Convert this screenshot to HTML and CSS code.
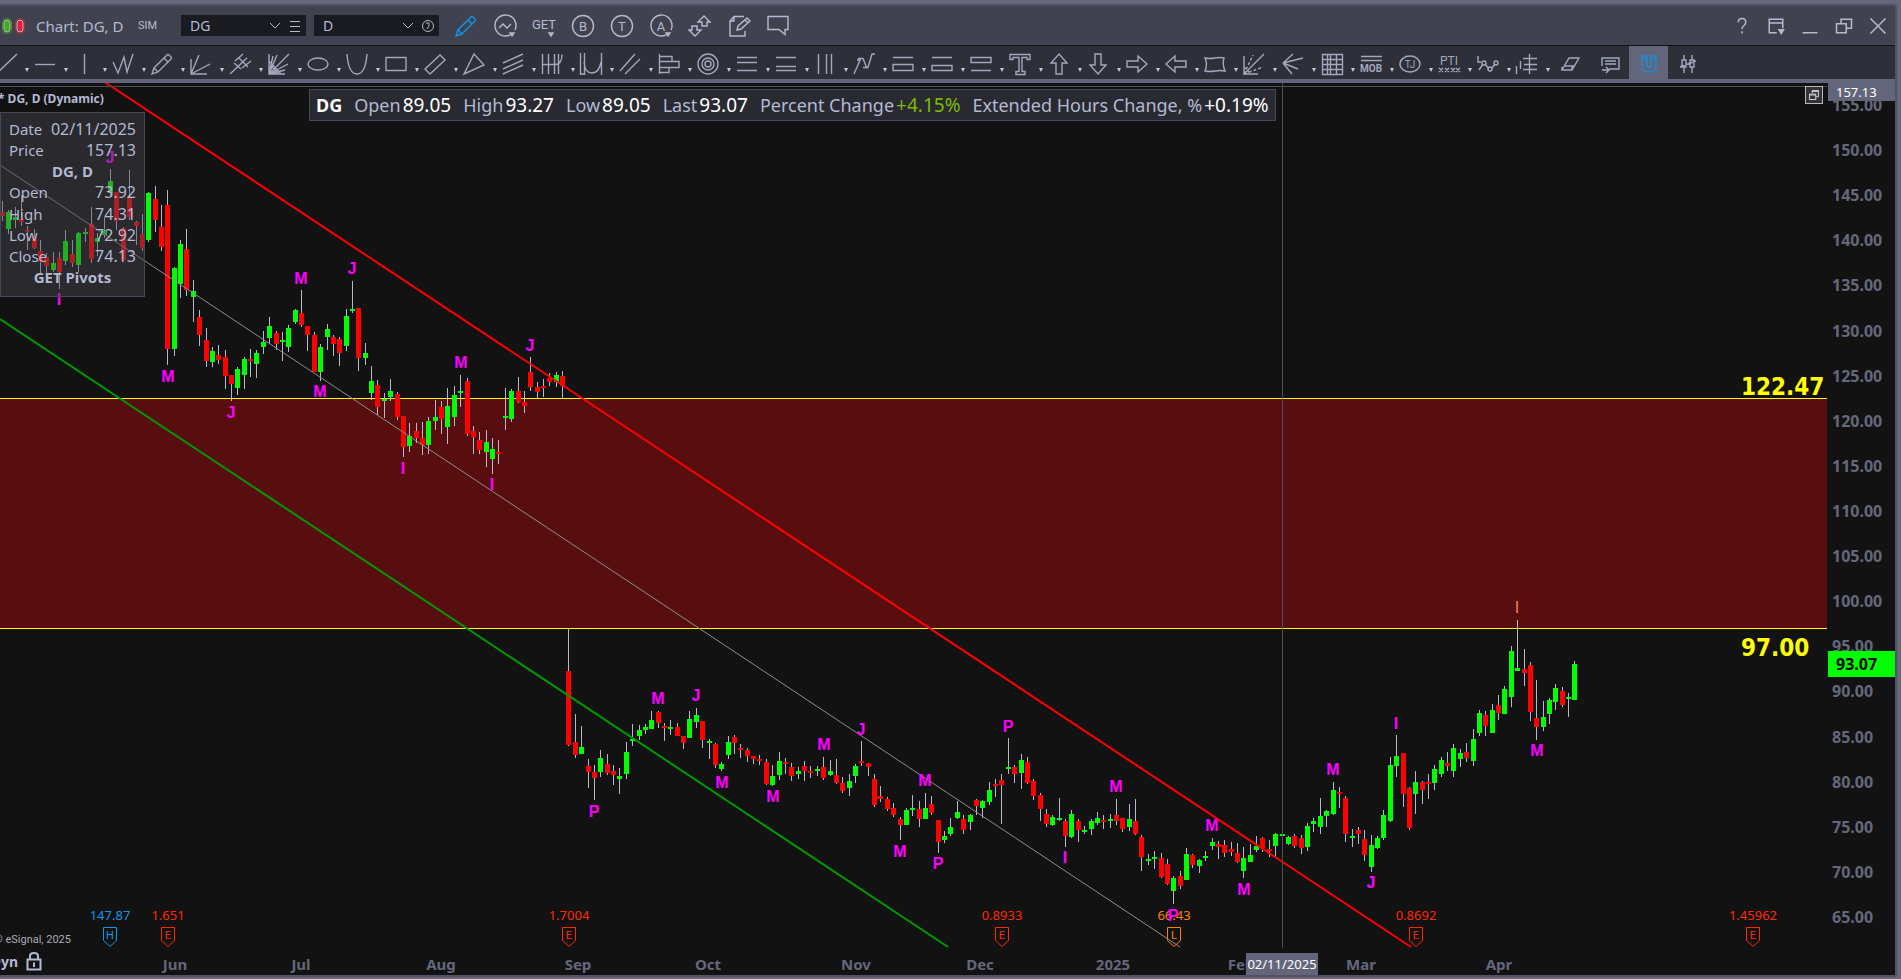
FILE: index.html
```html
<!DOCTYPE html>
<html lang="en">
    <head>
        <meta charset="utf-8">
        <title>Chart: DG, D</title>
        <link rel="stylesheet" href="styles.css">
    </head>
    <body>
        <div class="window">
            <header class="titlebar">
                <svg class="lights" viewBox="0 0 28 18">
                    <rect x="2.500" y="1.500" width="9" height="15" rx="4" fill="none" stroke="#3c9a1c"/>
                    <rect x="4" y="3" width="6" height="12" rx="3" fill="#3fae0e"/>
                    <rect x="15.500" y="1.500" width="9" height="15" rx="4" fill="none" stroke="#c0253a"/>
                    <rect x="17" y="3" width="6" height="12" rx="3" fill="#ee1c2e"/>
                </svg>
                <h1>Chart: DG, D</h1>
                <span class="sim">SIM</span>
                <div class="picker">
                    <select aria-label="Symbol"><option>DG</option></select>
                    <svg class="chevron" viewBox="0 0 12 8"><path d="M1 1l5 5 5-5"/></svg>
                    <button type="button" aria-label="Symbol list"><svg viewBox="0 0 14 14"><path d="M2 2.500h10M2 7.500h10M2 12.500h10"/></svg></button>
                </div>
                <div class="picker">
                    <select aria-label="Interval"><option>D</option></select>
                    <svg class="chevron" viewBox="0 0 12 8"><path d="M1 1l5 5 5-5"/></svg>
                    <button type="button" aria-label="Time template"><svg viewBox="0 0 14 14"><circle cx="7" cy="7" r="5.500"/><path d="M5 4h3v3l-2 3"/></svg></button>
                </div>
                <nav class="actions" id="actions"></nav>
                <nav class="controls" id="controls"></nav>
            </header>

            <nav class="toolbar" id="toolbar"></nav>

            <main class="chart">
                <div class="plot">
                    <svg id="plot" viewBox="0 83 1828 892" preserveAspectRatio="xMinYMin meet"></svg>
                    <p class="chart-name">* DG, D (Dynamic)</p>
                    <dl class="quote">
                        <div><dt class="symbol">DG</dt></div>
                        <div><dt>Open</dt><dd>89.05</dd></div>
                        <div><dt>High</dt><dd>93.27</dd></div>
                        <div><dt>Low</dt><dd>89.05</dd></div>
                        <div><dt>Last</dt><dd>93.07</dd></div>
                        <div><dt>Percent Change</dt><dd class="up">+4.15%</dd></div>
                        <div><dt>Extended Hours Change, %</dt><dd>+0.19%</dd></div>
                    </dl>
                    <table class="cursor">
                        <tr><th>Date</th><td>02/11/2025</td></tr>
                        <tr><th>Price</th><td>157.13</td></tr>
                        <tr><th colspan="2" class="head">DG, D</th></tr>
                        <tr><th>Open</th><td>73.92</td></tr>
                        <tr><th>High</th><td>74.31</td></tr>
                        <tr><th>Low</th><td>72.92</td></tr>
                        <tr><th>Close</th><td>74.13</td></tr>
                        <tr><th colspan="2" class="head">GET Pivots</th></tr>
                    </table>
                    <button type="button" class="popout" aria-label="Restore pane">
                        <svg viewBox="0 0 18 18"><path d="M7 7V4h7v7h-3" /><path d="M7 5h7"/><rect x="4" y="8" width="7" height="6"/><path d="M4 9h7"/></svg>
                    </button>
                </div>
                <aside class="scale">
                    <ul id="prices"></ul>
                    <span class="cursor-price">157.13</span>
                    <span class="last-price">93.07</span>
                </aside>
            </main>
        </div>
        <script src="chart.js"></script>
    </body>
</html>
```
FILE: styles.css
```css
*{
    box-sizing: border-box;
}

body{
    margin: 0;
    min-height: 100vh;
    display: flex;
    background-color: #65677b;
    font-family: "Noto Sans", "Open Sans", sans-serif;
    font-size: 15px;
    color: #b4b9d2;
    overflow: hidden;
}

button{
    padding: 0;
    border: 0;
    background: none;
    color: inherit;
    font: inherit;
}

svg{
    display: block;
    fill: none;
    stroke: currentColor;
}

.window{
    flex: 1;
    min-width: 0;
    display: flex;
    flex-direction: column;
    margin: 4px 4px 2px 0;
    border: 2px solid #505265;
    border-left: 0;
    border-top-right-radius: 4px;
}

/* title bar */
.titlebar{
    display: flex;
    align-items: center;
    height: 40px;
    background-color: #40434f;
    border-bottom: 1px solid #121212;
}

.lights{
    flex: none;
    width: 28px;
    height: 18px;
}

h1{
    margin: 0 0 0 8px;
    width: 102px;
    font-size: 15px;
    line-height: 20px;
    font-weight: normal;
    white-space: nowrap;
}

.sim{
    width: 43px;
    font-family: "Roboto", sans-serif;
    font-size: 11px;
}

.picker{
    display: flex;
    align-items: center;
    width: 125px;
    height: 21px;
    margin-right: 8px;
    padding: 0 4px 0 9px;
    background-color: #1a1b21;
}

.picker select{
    flex: 1;
    appearance: none;
    padding: 0;
    border: 0;
    background: none;
    color: #b4b9d2;
    font-family: inherit;
    font-size: 14px;
}

.chevron{
    width: 12px;
    height: 8px;
    margin-right: 7px;
}

.picker button svg{
    width: 14px;
    height: 14px;
}

.actions{
    display: flex;
    margin-left: -1px;
}

.actions button{
    width: 39px;
    display: flex;
    justify-content: center;
}

.actions svg,
.toolbar svg{
    width: 24px;
    height: 24px;
    stroke-width: 1.4;
}

.blue{
    color: #0d98e8 !important;
}

.controls{
    display: flex;
    margin-left: auto;
}

.controls button{
    width: 34px;
    display: flex;
    justify-content: center;
}

.controls svg{
    width: 18px;
    height: 18px;
    stroke-width: 2;
}

svg text{
    stroke: none;
    fill: currentColor;
    text-anchor: middle;
}

/* drawing tools */
.toolbar{
    display: flex;
    height: 37px;
    background-color: #2e3039;
    border-bottom: 4px solid #63667b;
    color: #a3a7bd;
}

.tools{
    display: flex;
    margin-left: -9px;
}

.toolbar button{
    flex: none;
    display: flex;
    align-items: center;
    width: 39px;
    height: 33px;
    padding: 3px 0 0 3px;
}

.toolbar button::after{
    content: "";
    margin: 12px 0 0 7px;
    border: 2px solid transparent;
    border-top: 4px solid #c4c8dc;
    border-bottom: 0;
}

.toolbar .single{
    padding-left: 0;
    justify-content: center;
}

.toolbar .single::after{
    display: none;
}

.toolbar .active{
    background-color: #63667b;
    color: #1a8fd8;
}

/* chart */
.chart{
    flex: 1;
    min-height: 0;
    display: flex;
    background-color: #121212;
}

.plot{
    position: relative;
    flex: 1;
    min-width: 0;
    overflow: hidden;
}

#plot{
    width: 100%;
    height: 100%;
    stroke: none;
}

#plot rect{ shape-rendering: crispEdges; }
.wick{ fill: #b4b9d2; }
.rise{ fill: #00ff00; }
.fall{ fill: #ff0000; }
.zone{ fill: #580e0e; }
.level{ fill: #ffff00; }
.crosshair{ fill: #4a4d5c; }

#plot .pivot{
    fill: #ff00ff;
    font: bold 16px "Liberation Sans", sans-serif;
}

#plot .pivot.open{
    fill: #ff7f40;
    font-weight: normal;
}

#plot .level-name{
    fill: #ffff00;
    font: bold 24px "DejaVu Sans Condensed", "DejaVu Sans", sans-serif;
    text-anchor: start;
}

#plot .month{
    fill: #65677b;
    font-weight: bold;
    font-size: 15px;
}

#plot .event{
    font-size: 13px;
}

#plot .event-type{
    font: 11px "Roboto", sans-serif;
}

#plot .cursor-date{
    fill: #ffffff;
    font-size: 13px;
}

#plot .credit{
    fill: #a9abb5;
    font: 11px "Roboto", sans-serif;
    text-anchor: end;
}

#plot .mode{
    font-size: 14px;
    font-weight: bold;
    text-anchor: end;
}

.chart-name{
    position: absolute;
    top: 6px;
    left: -2px;
    margin: 0;
    font-size: 12px;
    line-height: 20px;
    font-weight: bold;
}

.quote{
    position: absolute;
    top: 6px;
    left: 309px;
    display: flex;
    gap: 12px;
    height: 32px;
    margin: 0;
    padding: 0 6px;
    align-items: center;
    background-color: #292a31;
    border: 1px solid #454857;
    font-size: 18px;
    line-height: 30px;
    white-space: nowrap;
}

.quote div{
    display: flex;
    gap: 2px;
}

.quote dd{
    margin: 0;
    color: #ffffff;
    font-size: 19px;
}

.quote .symbol{
    color: #ffffff;
    font-weight: bold;
}

.quote .up{
    color: #7dbb00;
}

.cursor{
    position: absolute;
    top: 29px;
    left: 0;
    width: 145px;
    height: 185px;
    padding: 6px 8px 8px;
    border: 1px solid #454857;
    border-spacing: 0;
    background-color: rgba(70, 71, 82, 0.44);
}

.cursor th,
.cursor td{
    height: 21px;
    padding: 0;
    line-height: 21px;
    font-size: 15px;
    font-weight: normal;
    text-align: left;
}

.cursor td{
    font-size: 16px;
    text-align: right;
}

.cursor .head{
    font-size: 15px;
    font-weight: bold;
    text-align: center;
}

.popout{
    position: absolute;
    top: 3px;
    right: 5px;
    width: 18px;
    height: 18px;
    background-color: #33343a;
    border: 1px solid #b9b9b9;
    color: #e0e0e0;
}

.popout svg{
    width: 16px;
    height: 16px;
}

/* price scale */
.scale{
    position: relative;
    flex: none;
    width: 67px;
}

.scale ul{
    display: flex;
    flex-direction: column;
    justify-content: space-between;
    height: 100%;
    margin: 0;
    padding: 12px 0 48px 4px;
    list-style: none;
    font-size: 16px;
    font-weight: bold;
    color: #65677b;
    line-height: 20px;
}

.cursor-price{
    position: absolute;
    top: 0;
    left: 0;
    width: 100%;
    padding-left: 8px;
    background-color: #63667b;
    color: #ffffff;
    font-size: 13px;
    line-height: 18px;
}

.last-price{
    position: absolute;
    top: 568px;
    left: 0;
    width: 100%;
    padding-left: 8px;
    background-color: #00ff00;
    color: #000000;
    font-size: 16px;
    font-weight: bold;
    line-height: 26px;
}
```
FILE: chart.js
```js
// icons are drawn on a 24 x 24 box
const caret = '<path d="M17 19h4l-2 3z" fill="currentColor"/>';
const bubble = '<path d="M2 2.500h20v13h-3v5l-6-5H2z"/>';
const pencil = '<path d="M2 22l2-6L17 3q1-1 2 0l2 2q1 1 0 2L8 20zM4 16l4 4M14 6l4 4"/>';

const actions = [
    ['Drawing tools', pencil, 'blue'],
    ['Studies', '<path d="M17 21A10.500 10.500 0 1 1 22 16"/><path d="M6 14l4-4 4 4 4-4"/>' + caret],
    ['GET studies', '<text x="12" y="15" font-size="13" font-family="Roboto">GET</text>' + caret],
    ['Bias', '<circle cx="12" cy="12" r="10.500"/><text x="12" y="17" font-size="13" font-family="Roboto">B</text>'],
    ['Type', '<circle cx="12" cy="12" r="10.500"/><text x="12" y="17" font-size="13" font-family="Roboto">T</text>'],
    ['Alerts', '<path d="M17 21A10.500 10.500 0 1 1 22 16"/><text x="12" y="17" font-size="13" font-family="Roboto">A</text>' + caret],
    ['Trade', '<path d="M16 2l6 6h-3v4h-5V8h-4zM7 22l-6-6h3v-4h5v4h4z"/>'],
    ['Notes', '<path d="M17 2.500H7L3 7v15h15v-5M7 3v4H3M10 16l1-4 9-8 3 3-9 8zM18 6l3 3"/>'],
    ['Chat', bubble]
];

const controls = [
    ['Help', '<path d="M7 7q0-5 5-5t5 5q0 2-2 4-3 2-3 5M12 19v3"/>'],
    ['Dock', '<path d="M21 15V3H3v18h10M3 8h18"/><path d="M16 17h6l-3 5z" fill="currentColor"/>'],
    ['Minimize', '<path d="M2 21h20"/>'],
    ['Restore', '<path d="M2 9h13v12H2zM8 9V3h14v12h-7"/>'],
    ['Close', '<path d="M2 2l20 20M22 2L2 22"/>']
];

const tools = [
    ['Line', '<path d="M1 23L23 2"/>'],
    ['Horizontal line', '<path d="M2 12.500h20"/>'],
    ['Vertical line', '<path d="M12.500 2v20"/>'],
    ['Segments', '<path d="M2 10l5 11 6-16 3 15 6-18"/>'],
    ['Pencil', pencil],
    ['Fan', '<path d="M2 7v15h16M2 22L10 3M2 22l19-10"/>'],
    ['Pitchfork', '<path d="M2 22L19 6M6 11l7 6M7 9l8-7M11 6l9 9M14 16l9-7"/>'],
    ['Speed lines', '<path d="M2 2v20h16M2 22L22 2M2 22L10 3M2 22l19-10M2 9l12 13M2 22l16-4M2 22L6 4M3 13l8 8"/>'],
    ['Ellipse', '<ellipse cx="12" cy="12" rx="10" ry="6"/>'],
    ['Parabola', '<path d="M2 2C3 15 6 22 12 22S21 15 22 2"/>'],
    ['Rectangle', '<path d="M2 5.500h20v13H2z"/>'],
    ['Rotated rectangle', '<path d="M2 17L17 3l5 5L7 22z"/>'],
    ['Triangle', '<path d="M12 2l10 11L2 22z"/>'],
    ['Regression', '<path d="M2 11l20-9M2 17l20-9M2 22l20-9"/>'],
    ['Cycles', '<path d="M2.500 2v20M8.500 2v20M14.500 2v20M18.500 2v20M2 12.500h13q7 0 7-10"/>'],
    ['Time cycles', '<path d="M1.500 1v22M5.500 1v22M22.500 1v22M1 22h5M5 10q1 11 8 11t9-11"/>'],
    ['Parallel lines', '<path d="M2 19L17 2M7 22L22 7"/>'],
    ['Volume profile', '<path d="M2.500 2v20M2 4.500h13v5M2 9.500h20v6H2M2 20.500h10v-5"/>'],
    ['Circles', '<circle cx="12" cy="12" r="10"/><circle cx="12" cy="12" r="6"/><circle cx="12" cy="12" r="3"/>'],
    ['Retracement', '<path d="M2 5.500h20M2 10.500h20M2 18.500h20"/>'],
    ['Extension', '<path d="M2 5.500h20M2 14.500h20M2 18.500h20"/>'],
    ['Time retracement', '<path d="M5.500 2v20M13.500 2v20M18.500 2v20"/>'],
    ['Wave', '<path d="M2 22L9 6M6 6.500h5l4 10M11 15.500h5L20 2h3M5 8h3"/>'],
    ['Band up', '<path d="M2 5.500h20M2 12.500h20v6H2z"/>'],
    ['Band down', '<path d="M2 5.500h20M2 13.500h20v5H2z"/>'],
    ['Band top', '<path d="M2 5.500h20v5H2zM2 18.500h20"/>'],
    ['Text', '<path d="M2 2.500h20v5h-3v-2h-5v14h3v3H8v-3h3v-14H5v2H2z"/>'],
    ['Arrow up', '<path d="M12 2l8 9h-5v11H9V11H4z"/>'],
    ['Arrow down', '<path d="M12 22l8-9h-5V2H9v11H4z"/>'],
    ['Arrow right', '<path d="M22 12l-9-8v5H2v6h11v5z"/>'],
    ['Arrow left', '<path d="M2 12l9-8v5h11v6H11v5z"/>'],
    ['Banner', '<path d="M2 6q5 1 10 0t9 0q-2 6 1 13-5-1-10 0t-10 0q3-7 0-13z"/>'],
    ['Gann fan', '<path d="M2 4v18h14M2 22L22 2"/><path d="M2 22L11 3M2 22l19-7M2 15l7 7" stroke-dasharray="3 2"/>'],
    ['Speed fan', '<path d="M2 11L12 2M2 11l20-5M2 11l15 6M2 11l9 11"/>'],
    ['Grid', '<path d="M2.500 2.500h20v20h-20zM7.500 2v20M10.500 2v20M16.500 2v20M2 7.500h20M2 12.500h20M2 17.500h20"/>'],
    ['MOB', '<path d="M2 4.500h21M2 8.500h21"/><text x="12" y="20" font-size="10" font-family="Roboto" font-weight="bold">MOB</text>'],
    ['TJ', '<ellipse cx="12" cy="12" rx="10" ry="8"/><text x="12" y="16" font-size="10" font-family="Roboto">TJ</text>'],
    ['PTI', '<text x="12" y="13" font-size="12" font-family="Roboto">PTI</text><path d="M2 16l4 4M2 20l4-4M8 16l4 4M8 20l4-4M14 16l4 4M14 20l4-4M19 16l4 4M19 20l4-4"/>'],
    ['Elliott', '<path d="M2 4v6h3M3 18l4-6M9 12l4 5M16 16l3-4"/><circle cx="8" cy="11" r="2"/><circle cx="14" cy="17" r="2"/><circle cx="20" cy="11" r="2"/>'],
    ['Cycle lines', '<path d="M1.500 14v8M5.500 9v8M14.500 2v20M8 6.500h14M9 12.500h13M8 17.500h14"/>']
];

const single = [
    ['Eraser', '<path d="M3 18l7-12h10l-7 12zM5 14h10M3 18v-3M13 18v-4"/>', ''],
    ['Annotations', '<path d="M4 14V6h17v11H11M7 9h11M7 12h11M4 18h7M8 15l3 3-3 3"/>', ''],
    ['Magnet', '<path d="M5 4v9q0 7 7 7t7-7V4h-5v9q0 2-2 2t-2-2V4zM5 7h5M14 7h5"/>', 'active'],
    ['Candles', '<path d="M8 3v5M8 15v6M6 8h4v7H6zM16 3v5M16 15v6M14 8h4v7h-4zM4 15l16-6"/>', '']
];

function button(item, cls) {
    return '<button type="button" class="' + (item[2] || '') + ' ' + cls + '" aria-label="' + item[0] + '">' +
        '<svg viewBox="0 0 24 24">' + item[1] + '</svg></button>';
}

document.getElementById('actions').innerHTML = actions.map(a => button(a, '')).join('');
document.getElementById('controls').innerHTML = controls.map(c => button(c, '')).join('');
document.getElementById('toolbar').innerHTML =
    '<div class="tools">' + tools.map(t => button(t, '')).join('') + '</div>' +
    single.map(t => button(t, 'single')).join('');

// one bar per entry: direction, high, body top, body bottom, low
const bars = `
d 201 212 216 221,u 210 212 229 234,u 207 217 220 228,d 195 219 222 226,d 226 230 232 250,d 229 237 248 249
d 240 251 262 273,d 253 257 266 273,u 252 263 270 272,d 252 258 272 289,u 230 241 261 265,d 240 254 263 267
u 232 233 265 272,u 228 232 234 242,d 207 224 259 263,u 233 238 242 256,u 217 231 235 238,u 169 181 193 196
d 192 192 221 230,d 227 228 260 260,d 170 197 217 220,d 221 222 226 245,d 214 234 248 251,u 192 193 240 242
d 186 199 220 232,d 205 227 247 251,d 190 205 349 365,u 267 268 349 356,u 240 244 284 298,d 229 249 290 296
u 280 291 297 322,d 310 317 335 346,d 328 340 361 367,u 347 351 362 367,d 345 355 360 364,d 350 357 376 389
d 375 375 384 401,u 367 369 388 395,u 357 359 375 389,d 349 359 361 377,u 350 353 364 378,u 331 342 347 354
u 317 326 338 344,d 331 333 344 350,u 332 340 342 361,u 325 328 347 352,u 309 310 322 324,d 290 313 325 327
d 326 326 335 351,d 332 335 372 372,u 344 347 372 381,u 324 329 337 350,d 335 337 344 356,d 337 339 353 366
u 309 316 346 351,u 281 309 311 313,d 308 308 358 371,u 343 353 358 365,u 366 381 393 400,d 380 385 407 415
u 393 399 401 418,u 379 391 397 401,d 392 394 417 420,d 416 416 447 457,u 423 436 446 452,d 423 431 438 443
d 422 438 445 455,u 417 421 445 454,u 400 417 421 430,d 401 407 419 434,u 388 406 427 444,u 386 395 417 426
u 375 391 393 407,d 378 381 434 436,d 426 431 437 454,d 432 440 450 454,u 430 442 452 467,u 438 449 459 474
d 440 452 454 464,u 388 416 418 430,u 389 391 419 422,d 377 391 402 403,d 391 402 406 413,d 357 372 387 391
d 382 387 392 398,d 379 386 388 397,d 373 378 382 386,u 372 375 382 387,d 371 376 386 399,d 629 671 745 746
d 714 742 755 758,u 726 747 754 754,d 759 766 772 788,d 765 772 778 800,u 750 758 772 777,d 754 764 773 775
d 765 771 775 785,u 768 776 779 794,u 742 752 774 779,u 724 739 741 746,u 725 730 736 740,u 724 727 730 734
u 711 720 729 729,d 711 712 723 728,d 723 726 728 741,u 720 727 729 735,d 723 727 736 736,d 736 736 743 749
u 711 719 738 738,u 708 715 722 728,d 721 721 740 748,u 739 741 743 759,d 743 744 765 768,u 762 764 769 771
u 736 742 755 759,d 735 737 743 754,d 744 748 750 758,d 748 750 756 762,d 756 756 759 764,d 755 759 761 765
d 759 762 784 785,u 765 776 785 786,u 752 761 775 780,d 758 762 764 774,d 763 767 776 781,u 767 771 774 779
d 761 766 771 781,d 766 771 773 778,u 766 769 771 776,d 757 767 778 780,u 760 771 775 776,d 759 775 783 784
d 777 783 791 793,u 774 781 788 796,u 764 766 776 783,d 741 761 763 766,d 763 763 767 776,d 774 779 805 807
d 786 796 799 802,d 797 799 809 811,d 803 808 815 817,d 817 819 825 840,u 808 810 825 825,u 795 808 810 816
d 801 809 819 827,u 793 808 819 819,d 796 804 813 815,d 820 820 842 853,u 831 836 840 843,u 818 827 834 836
u 801 812 818 819,d 815 819 830 834,u 814 815 822 830,d 799 800 806 815,u 800 801 808 818,u 782 790 802 805
d 779 784 786 797,d 774 780 785 824,u 738 767 769 774,d 765 767 774 783,u 754 760 773 789,d 757 762 783 784
d 779 781 796 800,d 793 795 809 821,d 809 814 824 827,u 815 817 825 826,u 798 818 820 821,d 819 821 836 847
u 810 814 837 838,d 819 821 830 842,u 826 830 832 834,u 819 821 829 835,u 812 818 823 825,d 815 820 822 829
u 814 819 821 828,d 799 815 821 825,d 818 818 829 832,u 804 819 827 831,d 799 821 834 835,d 835 837 857 871
u 854 859 861 865,u 851 857 859 869,d 853 858 877 878,d 859 864 884 885,u 876 878 891 904,d 871 876 886 889
u 848 854 880 880,d 854 855 865 868,u 859 860 866 873,u 851 856 858 861,u 838 842 846 850,d 841 844 847 859
d 840 845 853 857,d 842 849 852 856,d 843 853 862 863,u 847 858 871 878,u 844 855 862 862,u 836 846 850 852
d 837 838 848 852,d 840 849 851 857,u 833 834 846 857,u 832 834 836 846,u 836 837 844 845,d 834 836 846 848
d 835 838 848 854,u 823 826 847 851,u 818 821 824 832,u 798 816 827 834,u 810 811 816 827,u 782 790 814 815
d 787 792 794 808,d 796 798 834 842,u 829 836 838 847,d 827 830 834 844,d 830 839 855 861,u 835 845 867 872
u 836 838 848 849,u 810 815 838 840,u 757 765 821 822,u 735 756 766 777,d 753 753 794 807,d 787 788 828 830
u 771 782 794 814,d 781 782 790 804,d 774 782 784 799,u 765 769 783 790,u 757 760 774 777,d 752 763 766 771
u 744 748 771 777,u 749 753 759 767,d 743 752 758 762,u 729 739 761 766,u 710 713 733 736,d 711 715 726 736
u 704 710 733 733,d 695 705 713 720,u 686 689 714 714,u 646 651 697 707,u 620 668 671 671,d 649 669 673 686
d 662 665 712 721,d 680 718 727 740,u 701 717 727 731,u 698 700 714 724,u 684 688 702 710,d 687 691 705 707
u 693 697 699 717,u 661 664 700 700`.trim().split(/[,\n]/);

const pivots = [
    ['J', 110, 158], ['I', 59, 300], ['M', 301, 279], ['J', 352, 269], ['M', 168, 377], ['J', 231, 413],
    ['M', 320, 392], ['M', 461, 363], ['J', 530, 346], ['I', 403, 469], ['I', 492, 485], ['P', 594, 812],
    ['M', 658, 699], ['J', 696, 696], ['M', 722, 783], ['M', 773, 797], ['M', 824, 745], ['J', 861, 730],
    ['M', 900, 852], ['M', 925, 781], ['P', 938, 864], ['P', 1008, 727], ['I', 1065, 858], ['M', 1116, 787],
    ['M', 1212, 826], ['P', 1173, 916], ['M', 1244, 890], ['M', 1333, 770], ['I', 1396, 724], ['J', 1371, 883],
    ['M', 1537, 751]
];

const events = [
    ['H', '147.87', 110, '#0d98e8'], ['E', '1.651', 168, '#ff2a00'], ['E', '1.7004', 569, '#ff2a00'],
    ['E', '0.8933', 1002, '#ff2a00'], ['L', '66.43', 1174, '#ff8000'], ['E', '0.8692', 1416, '#ff2a00'],
    ['E', '1.45962', 1753, '#ff2a00']
];

const months = [
    ['Jun', 175], ['Jul', 301], ['Aug', 441], ['Sep', 578], ['Oct', 708], ['Nov', 856],
    ['Dec', 980], ['2025', 1113], ['Feb', 1241], ['Mar', 1361], ['Apr', 1499]
];

function rect(cls, x, y, w, h) {
    return '<rect class="' + cls + '" x="' + x + '" y="' + y + '" width="' + w + '" height="' + h + '"/>';
}

function text(cls, x, y, t) {
    return '<text class="' + cls + '" x="' + x + '" y="' + y + '">' + t + '</text>';
}

let out = rect('zone', 0, 399, 1827, 229);
out += rect('level', 0, 398, 1827, 1) + rect('level', 0, 628, 1827, 1);

bars.forEach((bar, i) => {
    const [dir, high, top, bottom, low] = bar.split(' ');
    const x = Math.floor(2.3 + 6.367 * i);
    out += rect('wick', x, high, 1, low - high);
    out += rect(dir === 'u' ? 'rise' : 'fall', x - 2, top, 5, bottom - top);
});

// trend channel
out += '<path d="M0 165L1180 947" stroke="#8d8d8d"/>';
out += '<path d="M0 319L948 947" stroke="#009a00" stroke-width="2"/>';
out += '<path d="M106 83L1411 947" stroke="#ff0000" stroke-width="2"/>';

out += rect('crosshair', 1282, 83, 1, 865) + rect('crosshair', 0, 86, 1827, 1);

for (const [type, value, x, color] of events) {
    out += '<g color="' + color + '">' + text('event', x, 920, value) + text('event-type', x, 939, type) +
        '<path d="M' + (x - 6.5) + ' 927.500h13v13l-6.500 6-6.500-6z" stroke="currentColor"/></g>';
}

for (const [name, x, y] of pivots) out += text('pivot', x, y + 5, name);
out += text('pivot open', 1517, 613, 'I');

out += text('level-name', 1741, 395, '122.47') + text('level-name', 1741, 656, '97.00');

for (const [name, x] of months) out += text('month', x, 970, name);
out += '<rect x="1246" y="953" width="72" height="22" fill="#63667b"/>' + text('cursor-date', 1282, 969, '02/11/2025');

out += text('credit', 71, 943, '© eSignal, 2025') + text('mode', 18, 967, 'Dyn');
out += '<path d="M27.500 959.500h13v10h-13zM30 959v-3q0-3 4-3t4 3v3M34 963v4M33 963.500h2" stroke="currentColor" stroke-width="2"/>';

document.getElementById('plot').innerHTML = out;

let prices = '';
for (let p = 155; p >= 65; p -= 5) prices += '<li>' + p.toFixed(2) + '</li>';
document.getElementById('prices').innerHTML = prices;
```
